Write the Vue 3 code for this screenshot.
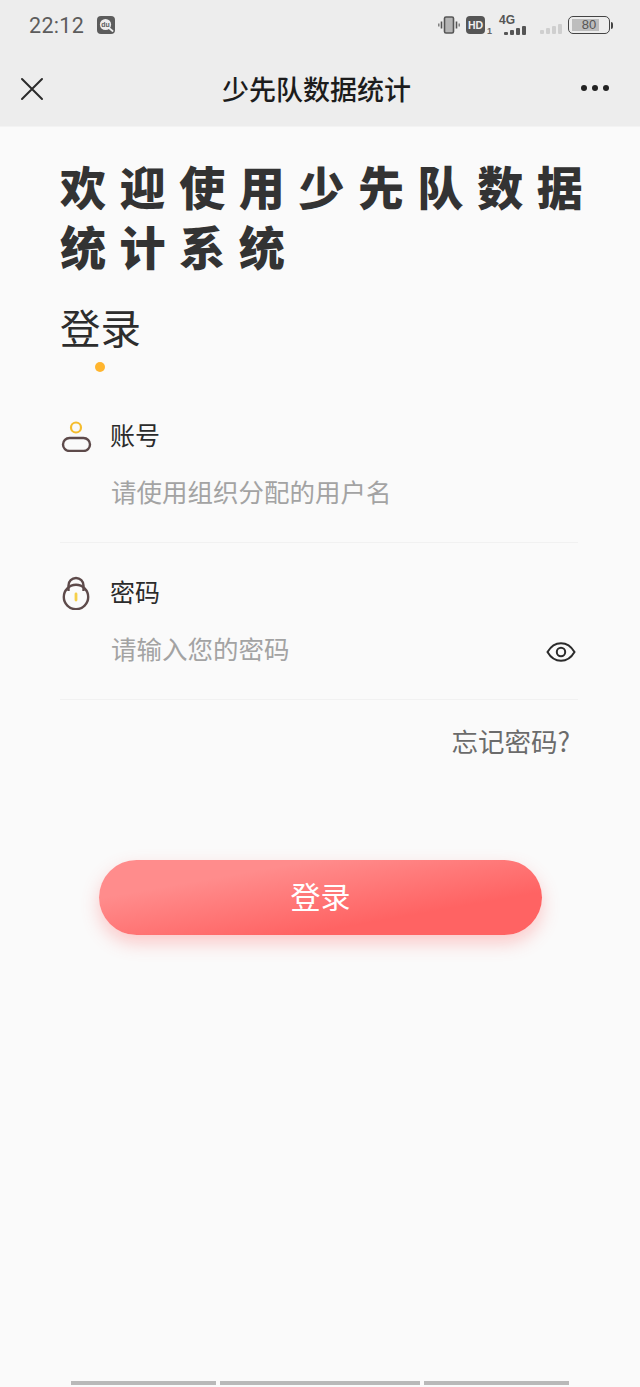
<template>
  <div class="page">
    <div class="top">
      <div class="status">
        <div class="status-left">
          <span class="time">22:12</span>
          <svg class="du" width="18" height="18" viewBox="0 0 18 18">
            <rect width="18" height="18" rx="4" fill="#5c5c5c" />
            <circle cx="8.5" cy="8.5" r="5.6" fill="#eee" />
            <path d="M12 12l3.6 3" stroke="#eee" stroke-width="1.8" stroke-linecap="round" />
            <text x="8.5" y="11" text-anchor="middle" class="du-text">du</text>
          </svg>
        </div>
        <div class="status-right">
          <svg class="vib" width="22" height="18" viewBox="0 0 22 18">
            <rect x="6.5" y="1" width="9" height="16" rx="1.5" fill="#b5b5b5" stroke="#555" stroke-width="1.6" />
            <path d="M3.5 5.5v7M18.5 5.5v7" stroke="#555" stroke-width="1.6" />
            <path d="M.8 7.5v3M21.2 7.5v3" stroke="#777" stroke-width="1.4" />
          </svg>
          <span class="hd">HD</span>
          <span class="hd-num">1</span>
          <div class="net">
            <span class="net-label">4G</span>
            <div class="bars">
              <i v-for="h in [3, 5, 7, 9]" :key="h" :style="{ height: h + 'px' }"></i>
            </div>
          </div>
          <div class="bars faint">
            <i v-for="h in [4, 6, 8, 10]" :key="h" :style="{ height: h + 'px' }"></i>
          </div>
          <div class="battery">
            <div class="level"></div>
            <span>80</span>
          </div>
          <div class="battery-tip"></div>
        </div>
      </div>
      <div class="nav">
        <svg class="close" width="24" height="24" viewBox="0 0 24 24">
          <path d="M2 2l20 20M22 2L2 22" stroke="#2b2b2b" stroke-width="2" stroke-linecap="round" />
        </svg>
        <span class="nav-title">少先队数据统计</span>
        <div class="more"><i></i><i></i><i></i></div>
      </div>
    </div>

    <div class="content">
      <h1 class="welcome">欢迎使用少先队数据统计系统</h1>
      <div class="login-title">登录</div>
      <div class="dot"></div>

      <div class="field first">
        <div class="label">
          <svg width="32" height="32" viewBox="0 0 32 32">
            <circle cx="16" cy="7.5" r="5" fill="none" stroke="#f5bd2e" stroke-width="2.2" />
            <rect x="3" y="18" width="27" height="13" rx="6.5" fill="none" stroke="#5d4a4a" stroke-width="2.4" />
          </svg>
          <span>账号</span>
        </div>
        <div class="input-row">
          <span class="placeholder">请使用组织分配的用户名</span>
        </div>
      </div>

      <div class="field">
        <div class="label">
          <svg width="32" height="34" viewBox="0 0 32 34">
            <path d="M8.5 15V9.5a7.5 7.5 0 0 1 15 0V15" fill="none" stroke="#5d4a4a" stroke-width="2.4" />
            <circle cx="16" cy="21" r="12.2" fill="none" stroke="#5d4a4a" stroke-width="2.4" />
            <path d="M16 18v6" stroke="#f5cf4a" stroke-width="2.8" stroke-linecap="round" />
          </svg>
          <span>密码</span>
        </div>
        <div class="input-row">
          <span class="placeholder">请输入您的密码</span>
          <svg class="eye" width="30" height="22" viewBox="0 0 30 22">
            <path d="M1.5 11C5 5 9.5 2.2 15 2.2S25 5 28.5 11C25 17 20.5 19.8 15 19.8S5 17 1.5 11Z" fill="none" stroke="#2b2b2b" stroke-width="2" />
            <circle cx="15" cy="11" r="4.2" fill="none" stroke="#2b2b2b" stroke-width="2" />
          </svg>
        </div>
      </div>

      <div class="forgot">忘记密码?</div>
      <button class="submit">登录</button>
    </div>

    <div class="home-bar"><i></i><i class="mid"></i><i></i></div>
  </div>
</template>

<script setup>
</script>

<style>
html, body {
  margin: 0;
  background: #fafafa;
}
</style>

<style scoped>
.page {
  position: relative;
  width: 640px;
  height: 1387px;
  overflow: hidden;
  background: #fafafa;
  font-family: "Noto Sans CJK SC", "Noto Sans", sans-serif;
}

.top {
  height: 127px;
  background: #ededed;
  border-bottom: 1px solid #f3f3f3;
  box-sizing: border-box;
}

.status {
  display: flex;
  justify-content: space-between;
  align-items: center;
  height: 50px;
  padding: 0 27px 0 29px;
}

.status-left {
  display: flex;
  align-items: center;
  gap: 13px;
}

.time {
  font-family: Roboto, "Liberation Sans", sans-serif;
  font-size: 21.5px;
  color: #5c5c5c;
  letter-spacing: 0.3px;
}

.du-text {
  font: bold 7px "Liberation Sans", sans-serif;
  fill: #5c5c5c;
}

.status-right {
  display: flex;
  align-items: center;
}

.vib {
  margin-right: 6px;
}

.hd {
  width: 19px;
  height: 18px;
  border-radius: 4px;
  background: #555;
  color: #eee;
  font: bold 10.5px/18px "Liberation Sans", sans-serif;
  text-align: center;
}

.hd-num {
  align-self: flex-end;
  margin: 0 6px 0 2px;
  font: bold 9px/10px "Liberation Sans", sans-serif;
  color: #666;
}

.net {
  display: flex;
  flex-direction: column;
  align-items: flex-end;
  width: 28px;
  margin-right: 14px;
  margin-bottom: 1px;
}

.net-label {
  align-self: flex-start;
  margin-left: 1px;
  font: bold 12px/10px "Liberation Sans", sans-serif;
  color: #555;
}

.bars {
  display: flex;
  align-items: flex-end;
  gap: 2px;
  height: 10px;
}

.bars i {
  display: block;
  width: 4px;
  border-radius: 1px;
  background: #555;
}

.bars.faint {
  margin-right: 6px;
  margin-top: 8px;
}

.bars.faint i {
  background: #cfcfcf;
}

.battery {
  position: relative;
  width: 40px;
  height: 16px;
  border: 1.5px solid #444;
  border-radius: 5px;
  text-align: center;
}

.level {
  position: absolute;
  left: 3px;
  top: 2px;
  bottom: 2px;
  width: 27px;
  background: #bdbdbd;
}

.battery span {
  position: relative;
  display: block;
  font: 13px/16px "Liberation Sans", sans-serif;
  color: #555;
}

.battery-tip {
  width: 2px;
  height: 7px;
  margin-left: 1px;
  border-radius: 0 2px 2px 0;
  background: #444;
}

.nav {
  position: relative;
  display: flex;
  align-items: center;
  justify-content: center;
  height: 77px;
}

.close {
  position: absolute;
  left: 20px;
  top: 27px;
}

.nav-title {
  margin-left: -7px;
  font-size: 27px;
  font-weight: 500;
  line-height: 80px;
  color: #1c1c1c;
}

.more {
  position: absolute;
  right: 31px;
  top: 35px;
  display: flex;
  gap: 5px;
}

.more i {
  display: block;
  width: 6px;
  height: 6px;
  border-radius: 50%;
  background: #222;
}

.content {
  padding: 0 62px 0 60px;
}

.welcome {
  width: 540px;
  margin: 28px 0 0;
  font-size: 46px;
  font-weight: 900;
  line-height: 60px;
  letter-spacing: 13.6px;
  color: #333;
}

.login-title {
  margin-top: 24px;
  font-size: 40.5px;
  line-height: 56px;
  color: #2d2d2d;
}

.dot {
  width: 10px;
  height: 10px;
  margin: 7px 0 0 35px;
  border-radius: 50%;
  background: #ffb52e;
}

.field {
  border-bottom: 1px solid #f1f1f1;
  height: 157px;
  padding-top: 30px;
  box-sizing: border-box;
}

.field.first {
  margin-top: 14px;
}

.label {
  display: flex;
  align-items: center;
  gap: 18px;
  height: 40px;
  font-size: 25px;
  color: #2b2b2b;
}

.label span {
  margin-bottom: 4px;
}

.input-row {
  display: flex;
  align-items: center;
  justify-content: space-between;
  height: 56px;
  margin-top: 6px;
  padding-left: 51px;
  padding-right: 2px;
}

.placeholder {
  font-size: 25.5px;
  color: #a3a3a3;
}

.eye {
  margin-top: 10px;
}

.forgot {
  margin-top: 17px;
  padding-right: 8px;
  text-align: right;
  font-size: 26.5px;
  line-height: 48px;
  color: #6b6b6b;
}

.submit {
  display: block;
  width: 443px;
  height: 75px;
  margin: 95px 0 0 39px;
  padding-bottom: 6px;
  border: none;
  border-radius: 38px;
  background: linear-gradient(170deg, #ff8c8c 25%, #ff6363 72%);
  box-shadow: 0 8px 18px rgba(255, 96, 96, 0.32);
  color: #fff;
  font-family: inherit;
  font-size: 30px;
}

.home-bar {
  position: absolute;
  left: 71px;
  bottom: 2px;
  display: flex;
  gap: 4px;
}

.home-bar i {
  display: block;
  width: 145px;
  height: 4px;
  background: #b9b9b9;
}

.home-bar i.mid {
  width: 200px;
}
</style>
